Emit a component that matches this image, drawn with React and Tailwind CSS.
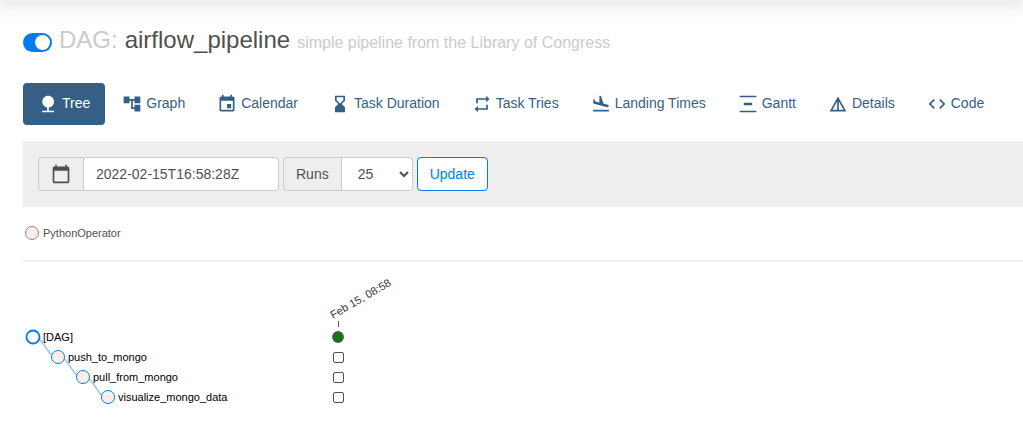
import React from "react";

const views = [
  { label: "Tree", active: true, d: "M13 16.12c3.47-.41 6.17-3.36 6.17-6.95 0-3.87-3.13-7-7-7s-7 3.13-7 7c0 3.47 2.52 6.34 5.83 6.89V20H5v2h14v-2h-6v-3.88z" },
  { label: "Graph", d: "M22 11V3h-7v3H9V3H2v8h7V8h2v10h4v3h7v-8h-7v3h-2V8h2v3z" },
  { label: "Calendar", d: "M17 12h-5v5h5v-5zM16 1v2H8V1H6v2H5c-1.11 0-1.99.9-1.99 2L3 19c0 1.1.89 2 2 2h14c1.1 0 2-.9 2-2V5c0-1.1-.9-2-2-2h-1V1h-2zm3 18H5V8h14v11z" },
  { label: "Task Duration", d: "M18 22l-.01-6L14 12l3.99-4.01L18 2H6v6l4 4-4 3.99V22h12zM8 7.5V4h8v3.5l-4 4-4-4z" },
  { label: "Task Tries", d: "M7 7h10v3l4-4-4-4v3H5v6h2V7zm10 10H7v-3l-4 4 4 4v-3h12v-6h-2v4z" },
  { label: "Landing Times", d: "M2.5 19h19v2h-19v-2zm16.84-3.15c.8.21 1.62-.26 1.84-1.06.21-.8-.26-1.62-1.06-1.84l-5.31-1.42-2.76-9.02L10.12 2v8.28L5.15 8.95l-.93-2.32-1.45-.39v5.17l16.57 4.44z" },
  { label: "Gantt", d: "M22 2v2H2V2h20zM7 10.5v3h10v-3H7zM2 20v2h20v-2H2z" },
  { label: "Details", d: "M12 3L2 21h20L12 3zm1 5.92L18.6 19H13V8.92zm-2 0V19H5.4L11 8.92z" },
  { label: "Code", d: "M9.4 16.6L4.8 12l4.6-4.6L8 6l-6 6 6 6 1.4-1.4zm5.2 0l4.6-4.6-4.6-4.6L16 6l6 6-6 6-1.4-1.4z" },
];

const nodes = [
  { name: "[DAG]", x: 10, y: 67 },
  { name: "push_to_mongo", x: 35, y: 87 },
  { name: "pull_from_mongo", x: 60, y: 107 },
  { name: "visualize_mongo_data", x: 85, y: 127 },
];

function Icon({ d, className }) {
  return (
    <svg viewBox="0 0 24 24" fill="currentColor" aria-hidden="true" className={className}>
      <path d={d} />
    </svg>
  );
}

function DagTree() {
  return (
    <svg width="500" height="150" className="mt-2 block text-[11px]" role="img" aria-label="DAG tree">
      {nodes.slice(1).map((n, i) => {
        const p = nodes[i];
        const mid = (p.x + n.x) / 2;
        return (
          <path
            key={n.name}
            d={`M${p.x},${p.y}C${mid},${p.y} ${mid},${n.y} ${n.x},${n.y}`}
            fill="none"
            stroke="#9ecae1"
            strokeWidth="1.5"
          />
        );
      })}
      {nodes.map((n, i) => (
        <g key={n.name}>
          <circle
            cx={n.x}
            cy={n.y}
            r="6.5"
            fill={i === 0 ? "#fff" : "#ffefeb"}
            stroke="#017cee"
            strokeWidth={i === 0 ? 1.8 : 1}
          />
          <text x={n.x + 10} y={n.y + 4} fill="#000">
            {n.name}
          </text>
          {i === 0 ? (
            <circle cx="315" cy={n.y} r="5" fill="#008000" stroke="#51504f" strokeWidth="1.8" />
          ) : (
            <rect x="310.5" y={n.y - 4.5} width="10" height="10" rx="1.5" fill="#fff" stroke="#51504f" />
          )}
        </g>
      ))}
      <path d="M315.5 51v6" stroke="#51504f" />
      <text transform="translate(310 49) rotate(-30)" fill="#333">
        Feb 15, 08:58
      </text>
    </svg>
  );
}

export default function App() {
  return (
    <div className="overflow-x-hidden bg-white font-['Liberation_Sans',Arial,sans-serif] text-sm leading-5 text-[#51504f]">
      <header className="h-0 shadow-[0_0_16px_4px_rgba(0,0,0,0.18)]" />
      <main className="pt-6 pl-[23px]">
        <h1 className="flex items-baseline gap-[7px] text-2xl leading-8 whitespace-nowrap">
          <input
            type="checkbox"
            role="switch"
            defaultChecked
            aria-label="Pause or unpause DAG"
            className="flex h-[19px] w-[29px] shrink-0 cursor-pointer appearance-none items-center self-end rounded-full bg-[#cbcbcb] p-0.5 mb-1 before:size-[15px] before:rounded-full before:bg-white checked:justify-end checked:bg-[#017cee]"
          />
          <span className="text-[#cbcbcb]">DAG:</span>
          <span>airflow_pipeline</span>
          <small className="text-base text-[#cbcbcb]">simple pipeline from the Library of Congress</small>
        </h1>

        <nav className="mt-[27px] flex gap-0.5">
          {views.map((v) => (
            <a
              key={v.label}
              href="#"
              aria-current={v.active ? "page" : undefined}
              className={
                "flex h-[42px] shrink-0 items-center gap-1 rounded px-[15px] " +
                (v.active ? "bg-[#355f84] text-white" : "text-[#355f84]")
              }
            >
              <Icon d={v.d} className="size-5" />
              <span className="pb-0.5">{v.label}</span>
            </a>
          ))}
        </nav>

        <form className="mt-4 flex gap-1 bg-[#efefef] px-[15px] py-4" onSubmit={(e) => e.preventDefault()}>
          <div className="flex h-[34px]">
            <label
              htmlFor="base-date"
              aria-label="Base date"
              className="flex w-[45px] items-center justify-center rounded-l border border-r-0 border-[#cbcbcb] bg-[#eee]"
            >
              <Icon
                className="size-5"
                d="M20 3h-1V1h-2v2H7V1H5v2H4c-1.1 0-2 .9-2 2v16c0 1.1.9 2 2 2h16c1.1 0 2-.9 2-2V5c0-1.1-.9-2-2-2zm0 18H4V8h16v13z"
              />
            </label>
            <input
              id="base-date"
              type="text"
              defaultValue="2022-02-15T16:58:28Z"
              className="w-[196px] rounded-r border border-[#cbcbcb] bg-white px-3"
            />
          </div>
          <div className="flex h-[34px]">
            <label
              htmlFor="num-runs"
              className="flex items-center rounded-l border border-r-0 border-[#cbcbcb] bg-[#eee] px-3"
            >
              Runs
            </label>
            <select
              id="num-runs"
              defaultValue="25"
              className="w-[72px] rounded-r border border-[#cbcbcb] bg-white px-3"
            >
              <option>5</option>
              <option>25</option>
              <option>50</option>
              <option>100</option>
              <option>365</option>
            </select>
          </div>
          <button type="submit" className="h-[34px] rounded border border-[#017cee] bg-white px-3 text-[#017cee]">
            Update
          </button>
        </form>

        <div className="mt-4 flex items-center gap-1 pl-0.5 text-[11px]">
          <span className="size-3.5 rounded-full border border-[#8f8583] bg-[#ffefeb]" />
          PythonOperator
        </div>
        <hr className="mt-[17px] border-t-2 border-[#efefef]" />
        <DagTree />
      </main>
    </div>
  );
}
